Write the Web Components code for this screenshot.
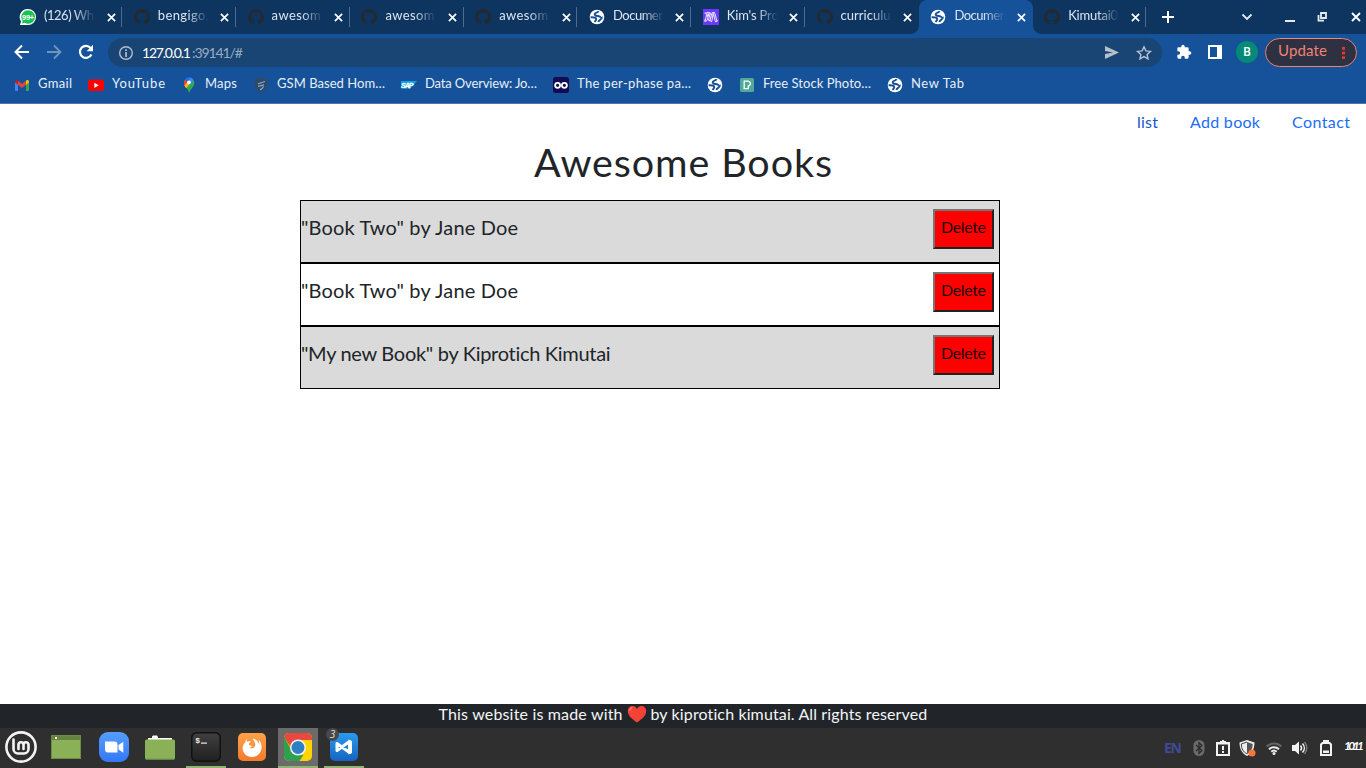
<!DOCTYPE html>
<html lang="en">
<head>
<meta charset="utf-8">
<title>Awesome Books</title>
<style>
html,body{margin:0;height:100%;overflow:hidden;background:#fff;font-family:Lato,"Open Sans",sans-serif}
</style>
</head>
<body>
<desk-top></desk-top>
<script>
const GH='<path fill="#24292f" d="M8 0a8 8 0 0 0-2.53 15.59c.4.07.55-.17.55-.38v-1.34c-2.2.48-2.7-1.07-2.7-1.07-.36-.92-.9-1.17-.9-1.17-.72-.5.06-.48.06-.48.8.05 1.23.82 1.23.82.7 1.22 1.87.87 2.33.66.07-.52.28-.87.5-1.07C4.75 11.3 2.9 10.68 2.9 7.58c0-.87.3-1.6.82-2.15-.08-.2-.36-1.02.08-2.12 0 0 .67-.22 2.2.82a7.5 7.5 0 0 1 4 0c1.53-1.04 2.2-.82 2.2-.82.44 1.1.16 1.92.08 2.12.51.56.82 1.28.82 2.15 0 3.1-1.87 3.75-3.65 3.95.29.25.54.73.54 1.48v2.2c0 .21.15.46.55.38A8 8 0 0 0 8 0z"/>';
const ICONS={
gh:['0 0 16 16',GH],
wa:['0 0 16 16','<path fill="#fff" d="M8 0a8 8 0 0 1 0 16H0l1-3.6A8 8 0 0 1 8 0z"/><path fill="#18c254" d="M8 1.2a6.8 6.8 0 1 1-3.5 12.5L2 14.5l.6-2.6A6.8 6.8 0 0 1 8 1.2z"/><text x="8.1" y="10.8" text-anchor="middle" font-family="Liberation Sans" font-weight="700" font-size="7.4" fill="#fff" textLength="12">99+</text>'],
globe:['0 0 16 16','<circle cx="8" cy="8" r="7.3" fill="#fff"/><path fill="none" stroke="#154f94" stroke-width="1.9" d="M9.5 2.2c-.3 2-3.6 1-3.8 3-.1 1.4 1.7 1.6 3.2 1.8 1.8.2 2 1.2 3.2.8M1.6 8.3c2.5 0 5.3-.2 5.6 1.5.2 1.6-1 1.4-1.3 3.4M13.6 8.2c-1 .2-1.2 1.8-2.2 2.4-1 .6-1.7.8-2 2.4"/>'],
kim:['0 0 16 16','<path fill="#6e38f7" d="M0 0h16v16H0z"/><path fill="none" stroke="#e2dcff" stroke-width="1.1" d="M1.5 12.5C3 12 3.2 3.2 5 3.2S6.8 12.7 8.3 12.7 9.3 3.2 11 3.2s2 9.3 3.5 9.3M1.8 5C3 2.6 4 3.6 4.8 8s2 5.4 3.2 0 2-6.4 3.2 0 2 5 3.3 3M1.8 10.5c-.5 2.5 2.5 2.7 3.2-2s1.8-7 3-2.5"/>'],
close:['0 0 10 10','<path stroke="#fff" stroke-width="1.9" d="M1 1l8 8M9 1L1 9"/>'],
plus:['0 0 12 12','<path stroke="#fff" stroke-width="2" d="M6 0v12M0 6h12"/>'],
chev:['0 0 12 8','<path fill="none" stroke="#e6eaf0" stroke-width="1.8" d="M1.5 1.5L6 6l4.500-4.500"/>'],
min:['0 0 10 12','<path fill="#e6eaf0" d="M0 9h10v2H0z"/>'],
rest:['0 0 10 10','<path fill="none" stroke="#e6eaf0" stroke-width="1.8" d="M4 1h5v5H4zM1.500 3v5.700H7"/>'],
back:['0 0 16 16','<path fill="none" stroke="#fff" stroke-width="2" d="M15 8H2M8 1.500L1.500 8 8 14.500"/>'],
fwd:['0 0 16 16','<path fill="none" stroke="#7393bd" stroke-width="1.800" d="M1 8h13M8 1.500L14.500 8 8 14.500"/>'],
reload:['0 0 16 16','<path fill="none" stroke="#fff" stroke-width="2.200" d="M13.400 10.500A6 6 0 1 1 12.600 4"/><path fill="#fff" d="M15 .8v6.400H8.600z"/>'],
info:['0 0 16 16','<circle cx="8" cy="8" r="6.300" fill="none" stroke="#b5bdc9" stroke-width="1.400"/><path fill="#b5bdc9" d="M7.200 4.200h1.700v1.700H7.200zM7.200 7h1.700v5H7.200z"/>'],
send:['0 0 14 13','<path fill="#b6bfcb" d="M0 0l14 6.500L0 13V8l8-1.500L0 5z"/>'],
star:['0 0 16 16','<path fill="none" stroke="#b8c2ce" stroke-width="1.400" d="M8 1.800l1.900 4.100 4.500.5-3.300 3 .9 4.400L8 11.600l-4 2.200.9-4.400-3.300-3 4.500-.5z"/>'],
puzzle:['0 0 24 24','<path fill="#fff" d="M20.500 11H19V7a2 2 0 0 0-2-2h-4V3.500a2.500 2.500 0 0 0-5 0V5H4a2 2 0 0 0-2 2v3.800h1.500a2.700 2.700 0 0 1 0 5.400H2V20a2 2 0 0 0 2 2h3.800v-1.500a2.700 2.700 0 0 1 5.400 0V22H17a2 2 0 0 0 2-2v-4h1.500a2.500 2.500 0 0 0 0-5z"/>'],
panel:['0 0 14 14','<path fill="#fff" fill-rule="evenodd" d="M0 0h14v14H0zM2 2v10h7V2z"/>'],
gmail:['0 0 16 16','<path fill="#4285f4" d="M1 4.500l3 2V14H2a1 1 0 0 1-1-1z"/><path fill="#34a853" d="M15 4.500l-3 2V14h2a1 1 0 0 0 1-1z"/><path fill="#ea4335" d="M4 3.800l4 3.100 4-3.100v4L8 11 4 7.800z"/><path fill="#c5221f" d="M1 4.800c0-2 2-2.400 3-1.300v4.300L1 5.600z"/><path fill="#fbbc04" d="M15 4.800c0-2-2-2.400-3-1.300v4.300l3-2.200z"/>'],
yt:['0 0 16 16','<rect y="2.500" width="16" height="11.500" rx="2.500" fill="#f00"/><path fill="#fff" d="M6.300 5.700l4.400 2.600-4.400 2.600z"/>'],
maps:['0 0 16 16','<path fill="#34a853" d="M8 16c-.5-2-1.300-3.500-2.800-5.200L12.600 3.300c1.800 3 .2 5.500-1.500 7.600C9.500 12.800 9 14 8 16z"/><path fill="#fbbc04" d="M3.200 7.300L7 9l-1.800 2C4 9.500 3.400 8.500 3.200 7.300z"/><path fill="#ea4335" d="M4 2.400l3 2.600-3.500 4C2.600 6.500 2.600 4.400 4 2.400z"/><path fill="#1a73e8" d="M4 2.400A5 5 0 0 1 9.500.5L6.500 5z"/><path fill="#4285f4" d="M9.500.5a5 5 0 0 1 3.200 3L8.500 8l-2-3z"/><path fill="#fbbc04" d="M3.500 8.500l3-3.600 2 2.600-3.300 3.500z"/><circle cx="8" cy="5.300" r="1.900" fill="#fff"/>'],
shield:['0 0 16 16','<path fill="#34495e" d="M8 .5l6 2.300c0 6-.5 10-6 13-5.500-3-6-7-6-13z"/><path fill="none" stroke="#7aa7dd" stroke-width="1.300" d="M12 4.500L5 6.800M11 7.800L5 9.300M10 9.200c.5 1-1 3-3 3.500"/>'],
sap:['0 0 16 16','<path fill="#0a9fe6" d="M0 4h16l-6.500 7.500H0z"/><text x="0" y="10.700" font-family="Liberation Sans" font-weight="700" font-style="italic" font-size="7" fill="#fff" stroke="#fff" stroke-width=".3" textLength="12.500">SAP</text>'],
oo:['0 0 16 16','<rect width="16" height="16" rx="2.500" fill="#130c54"/><g fill="none" stroke="#fff" stroke-width="1.800"><circle cx="4.600" cy="8.300" r="2.500"/><circle cx="11.400" cy="8.300" r="2.500"/></g>'],
pex:['0 0 16 16','<rect x="1" y="1" width="14" height="14" rx="1.500" fill="#4fab98"/><path fill="none" stroke="#fff" stroke-width="1.300" d="M5.200 4.200h3.600a2.300 2.300 0 0 1 .5 4.600v2.800H5.200z"/>'],
heart:['0 0 20 18','<path fill="#f44336" d="M10 17.500C5 14 .8 10.500.8 6 .8 3 3 1 5.500 1 7.500 1 9.200 2.200 10 4c.8-1.800 2.500-3 4.500-3 2.500 0 4.700 2 4.700 5 0 4.500-4.200 8-9.200 11.500z"/><path fill="none" stroke="#ff8a80" stroke-width="1.200" stroke-linecap="round" d="M2.800 5.200c.3-1.300 1-2 2-2.300"/>'],
mint:['0 0 32 32','<circle cx="16" cy="16" r="14.600" fill="none" stroke="#f4f4f4" stroke-width="2.600"/><path fill="none" stroke="#f4f4f4" stroke-width="2.600" stroke-linecap="round" d="M8.500 8.500V18a4.500 4.500 0 0 0 4.500 4.500h6a4.500 4.500 0 0 0 4.500-4.500v-4.300a2.500 2.500 0 0 0-5 0V18M18.500 13.700a2.500 2.500 0 0 0-5 0V18"/>'],
win:['0 0 30 24','<path fill="#8bb158" d="M0 0h30v24H0z"/><path fill="#66833f" d="M0 0h30v5H0z"/><path fill="#fff" d="M4 2h2v2H4z"/><path fill="none" stroke="#6c8b44" d="M.5.5h29v23H.5z"/>'],
zoom:['0 0 30 30','<defs><linearGradient id="g" x2="0" y2="1"><stop stop-color="#559dff"/><stop offset="1" stop-color="#3478f6"/></linearGradient></defs><rect width="30" height="30" rx="9" fill="url(#g)"/><path fill="#fff" d="M6 9.500h9.500a3 3 0 0 1 3 3v8H9a3 3 0 0 1-3-3zM19.500 13l4.800-3.300v11L19.500 17.500z"/>'],
folder:['0 0 30 25','<path fill="#fff" d="M3 6V3h4V1.500L8 .5h4l1 1.500V3h14v4z"/><rect y="4.500" width="30" height="20" rx="1.500" fill="#8bb158"/><path fill="#75964a" d="M1 23.500h28v1H1z"/>'],
term:['0 0 30 30','<defs><linearGradient id="g" x2="0" y2="1"><stop stop-color="#404040"/><stop offset="1" stop-color="#202020"/></linearGradient></defs><rect x=".75" y=".75" width="28.500" height="28.500" rx="5" fill="url(#g)" stroke="#111" stroke-width="1.500"/><text x="4.300" y="10.500" font-family="Liberation Mono" font-weight="700" font-size="8" fill="#eee">$</text><path fill="#eee" d="M10 10.500h6v1.200h-6z"/>'],
ff:['0 0 28 28','<defs><linearGradient id="g" x2="0" y2="1"><stop stop-color="#ffa24a"/><stop offset="1" stop-color="#f47b2c"/></linearGradient></defs><rect width="28" height="28" rx="5" fill="url(#g)"/><path fill="#fff" d="M9 5.500C7.500 7.500 7.600 8 7.500 9 4 12 3.800 17 6.200 20.200c4 5.300 12 4.700 15.600-.2 3-4.300 2.300-10.500-1.600-13.500 1 2 1.300 3.500 1 5C20 7.500 17.500 6 15.500 5.500c-1.500 1.500 2 3.500 1.800 6-.2 3.500-3.300 4.600-5.800 3.200 1.300-.2 2.500-1 3-2-2 .3-4-.7-3.500-2.300.3-.9 1.500-1 2-1.700-1.500-.7-3-.5-3.800.3-.6-1-.7-2.300-.2-3.500z"/>'],
chrome:['0 0 28 28','<defs><clipPath id="c"><rect width="28" height="28" rx="5"/></clipPath></defs><g clip-path="url(#c)"><path fill="#ffd400" d="M0 0h28v28H0z"/><path fill="#e9483f" d="M0 0h28v7H14L8 16 0 4z"/><path fill="#2fa14e" d="M0 3.500l7.500 13.700 6 4.500h6L15.500 28H0z"/></g><circle cx="14" cy="14.500" r="8" fill="#f3f3f3"/><circle cx="14" cy="14.500" r="6.500" fill="#2f80c3"/>'],
code:['0 0 28 28','<defs><linearGradient id="g" x2="0" y2="1"><stop stop-color="#2a9af0"/><stop offset="1" stop-color="#1565c0"/></linearGradient></defs><rect width="28" height="28" rx="5" fill="url(#g)"/><path fill="none" stroke="#fff" stroke-width="3" stroke-linejoin="round" d="M7 10.500l12.500 9v-11L7 17.500z"/><path fill="#fff" d="M18.500 6.500l3.500 1.500v12l-3.500 1.500z"/>'],
bt:['0 0 12 18','<rect x=".5" y="1" width="11" height="16" rx="5.500" fill="#6b6b6b"/><path fill="none" stroke="#292929" stroke-width="1.200" d="M3 6l6 5.500-3 2.800V3.700l3 2.800L3 12"/>'],
clip:['0 0 14 16','<path fill="#f2f2f2" fill-rule="evenodd" d="M0 2h4V1h2V0h2v1h2v1h4v14H0zM2 4.500V14h10V4.500z"/><path fill="#f2f2f2" d="M6 6h2v4H6zM6 11h2v2H6z"/>'],
guard:['0 0 17 17','<path fill="#eee" d="M8 0l7.500 2.500C15.500 9 13 13.500 8 16 3 13.500.5 9 .5 2.500z"/><path fill="#555" d="M8 2l5.700 2c0 5-2 8-5.700 10z"/><path fill="none" stroke="#444" d="M8 2L2.300 4C2.300 9 4.300 12 8 14"/><circle cx="13" cy="13" r="3.500" fill="#ff7438"/>'],
wifi:['0 0 16 13','<g fill="none" stroke-width="2"><path stroke="#666" d="M.7 4.500a10.500 10.500 0 0 1 14.600 0"/><path stroke="#eee" d="M3 7.300a7.300 7.300 0 0 1 10 0M5.300 9.800a4 4 0 0 1 5.400 0"/></g><circle cx="8" cy="11.400" r="1.500" fill="#eee"/>'],
vol:['0 0 16 14','<path fill="#f2f2f2" d="M0 4h3l4-3.500v13L3 10H0z"/><path fill="none" stroke="#f2f2f2" stroke-width="1.500" d="M8.500 4.500c1.300 1.500 1.300 3.500 0 5M10.500 2.500c2.400 2.600 2.400 6.400 0 9"/><path fill="none" stroke="#777" stroke-width="1.500" d="M12.500 1c3 3.500 3 8.500 0 12"/>'],
bat:['0 0 12 16','<path fill="#f2f2f2" fill-rule="evenodd" d="M3 0h6v2h1l2 2v12H0V4l2-2h1zM2 5v9h8V5L9 4H3z"/><path fill="#f2f2f2" d="M3 10.500h6V13H3z"/>']
};
const make=(css,html)=>class extends HTMLElement{
  connectedCallback(){
    if(this.shadowRoot)return;
    this.attachShadow({mode:'open'}).innerHTML='<style>'+css+'</style>'+(typeof html==='function'?html(this):html);
  }
};
const def=(n,css,html)=>customElements.define(n,make(css,html));

def('ui-icon',':host{display:block;flex:none}svg{display:block;width:100%;height:100%;overflow:visible}',el=>{
  const [vb,body]=ICONS[el.getAttribute('name')];
  const [, ,w,h]=vb.split(' ');
  el.style.width=(el.getAttribute('w')||w)+'px';
  el.style.height=(el.getAttribute('h')||h)+'px';
  return `<svg viewBox="${vb}">${body}</svg>`;
});
/* A single line of text whose tracking is set so that it fills a given width. */
customElements.define('fit-text',class extends HTMLElement{
  connectedCallback(){
    if(this.shadowRoot)return;
    this.attachShadow({mode:'open'}).innerHTML='<style>:host{display:block;flex:none;white-space:pre}span{display:inline-block}</style><span><slot></slot></span>';
    const s=this.shadowRoot.querySelector('span'),w=+this.getAttribute('w'),n=this.textContent.length;
    this.style.width=w+'px';
    const free=w-s.getBoundingClientRect().width;
    s.style.letterSpacing=(free/Math.max(1,n-1)).toFixed(3)+'px';
    s.style.marginRight='-4px';
  }
});
def('browser-tab',`:host{display:flex;position:relative;box-sizing:border-box;width:113.8px;height:34px;padding-left:11.500px;align-items:center;flex:none;color:#dbe4ef;font-size:13px}
:host([active]){background:#15529a;border-radius:8px 8px 0 0}
:host([active])::before,:host([active])::after{content:"";position:absolute;bottom:0;width:8px;height:8px}
:host([active])::before{left:-8px;background:radial-gradient(circle at 0 0,transparent 7.500px,#15529a 8px)}
:host([active])::after{right:-8px;background:radial-gradient(circle at 100% 0,transparent 7.500px,#15529a 8px)}
.t{width:51px;margin-left:8px;height:22px;line-height:18px;overflow:hidden;-webkit-mask:linear-gradient(90deg,#000 58%,transparent);mask:linear-gradient(90deg,#000 58%,transparent)}
.x{margin-left:11.500px}
.s{position:absolute;right:0;top:7px;width:1px;height:20px;background:#4f6c8f}`,
el=>`<ui-icon name="${el.getAttribute('icon')}"></ui-icon><div class="t"><fit-text w="${el.getAttribute('w')}">${el.getAttribute('label')}</fit-text></div><ui-icon class="x" name="close" w="9" h="9"></ui-icon>${el.hasAttribute('sep')?'<div class="s"></div>':''}`);
def('tab-strip',`:host{display:flex;height:34px;background:#0d3560;padding-left:8.500px;align-items:center}
.plus{margin-left:16px}.chev{margin-left:67px}.min{margin-left:32px}.rest{margin-left:22px}.cl{margin-left:23.500px}`,
[['wa','(126) Wh',50,1],['gh','bengigo,',51,1],['gh','awesom',49,1],['gh','awesom',49,1],['gh','awesom',49,1],['globe','Documer',50,1],['kim',"Kim's Pro",52,1],['gh','curriculu',50,0],['globe','Documer',50,2],['gh','Kimutai0',50,1]]
.map(([i,l,w,s])=>`<browser-tab icon="${i}" label="${l}" w="${w}" ${s===1?'sep':s===2?'active':''}></browser-tab>`).join('')+
'<ui-icon class="plus" name="plus"></ui-icon><ui-icon class="chev" name="chev"></ui-icon><ui-icon class="min" name="min"></ui-icon><ui-icon class="rest" name="rest"></ui-icon><ui-icon class="cl" name="close"></ui-icon>');
def('nav-bar',`:host{display:flex;height:36px;align-items:center;padding-left:14px;color:#fff}
.g{margin-left:16px}
.url{box-sizing:border-box;display:flex;align-items:center;width:1054px;height:29px;margin:1px 0 0 14px;border-radius:15px;background:#194575;padding:0 10px;font-size:14px;line-height:18px}
.url .h{margin-left:8px}.url .r{color:#98abc3;margin-left:1px}.sp{flex:1}.st{margin-left:17px}
.pz{margin-left:14px}.pn{margin-left:16px}
.av{width:22px;height:22px;border-radius:50%;background:#058a78;margin-left:14px;font:500 12px/22px Roboto,sans-serif;text-align:center}
.up{box-sizing:border-box;display:flex;width:92px;height:29px;border:1px solid #ef8377;border-radius:15px;background:#2d3141;margin:1px 0 0 7px;padding-left:12px;color:#ef8377;font-size:15px;line-height:23px}
.dots{margin:7px 0 0 15px;width:3px;height:13px;background:radial-gradient(circle,#e8362b 1.500px,transparent 1.900px) 0 0/3px 4.700px}`,
`<ui-icon name="back"></ui-icon><ui-icon class="g" name="fwd"></ui-icon><ui-icon class="g" name="reload"></ui-icon>
<div class="url"><ui-icon name="info"></ui-icon><fit-text class="h" w="49">127.0.0.1</fit-text><fit-text class="r" w="51">:39141/#</fit-text><div class="sp"></div><ui-icon name="send"></ui-icon><ui-icon class="st" name="star"></ui-icon></div>
<ui-icon class="pz" name="puzzle" w="16" h="16"></ui-icon><ui-icon class="pn" name="panel"></ui-icon><div class="av">B</div><div class="up"><fit-text w="49">Update</fit-text><div class="dots"></div></div>`);
def('bookmark-item',':host{display:flex;align-items:center;gap:8px;flex:none;height:16px}fit-text{margin-top:-4px;line-height:16px}',
el=>`<ui-icon name="${el.getAttribute('icon')}"></ui-icon>`+(el.hasAttribute('w')?`<fit-text w="${el.getAttribute('w')}">${el.getAttribute('label')}</fit-text>`:''));
def('bookmark-bar',':host{display:flex;gap:16px;box-sizing:border-box;height:34px;padding:7px 0 0 14px;color:#e8eef6;font-size:13px;border-bottom:1px solid #4977ae}',
[['gmail','Gmail',34],['yt','YouTube',53],['maps','Maps',32],['shield','GSM Based Hom…',108],['sap','Data Overview: Jo…',112],['oo','The per-phase pa…',114],['globe'],['pex','Free Stock Photo…',108],['globe','New Tab',53]]
.map(([i,l,w])=>`<bookmark-item icon="${i}" ${l?`label="${l}" w="${w}"`:''}></bookmark-item>`).join(''));
def('book-row',`:host{display:flex;justify-content:space-between;box-sizing:border-box;height:63px;border:1px solid #000;padding:8px 5px 0 0;color:#212529;font-size:20px;line-height:37px}
:host([shade]){background:#dadada}
button{box-sizing:border-box;width:61px;height:40px;border:2px solid;border-color:#767676 #212121 #212121 #767676;background:red;margin:0;padding:0 0 4px 6px;font:16px/32px Lato,sans-serif;color:#1c0000;text-align:left}`,
el=>`<fit-text w="${el.getAttribute('w')}"><slot></slot>${el.getAttribute('label')}</fit-text><button><fit-text w="45">Delete</fit-text></button>`);
def('books-page',`:host{display:flex;flex-direction:column;height:624px;background:#fff}
nav{display:flex;justify-content:flex-end;gap:32px;height:36px;padding-right:16px;font-size:16px;line-height:35px;color:#1a6dfa}
nav .a{color:#1458ca}
h1{margin:0;display:flex;justify-content:center;height:60px;font-size:39.500px;font-weight:400;line-height:44px;color:#212529}
main{width:700px;margin-left:300px;flex:1}
footer{display:flex;justify-content:center;height:24px;background:#212529;color:#f3f5f7;font-size:16px;line-height:20px}
footer ui-icon{margin:1px 4px 0 4px}`,
`<nav><fit-text class="a" w="21">list</fit-text><fit-text w="70">Add book</fit-text><fit-text w="58">Contact</fit-text></nav>
<h1><fit-text w="298">Awesome Books</fit-text></h1>
<main><book-row shade w="217" label="&amp;quot;Book Two&amp;quot; by Jane Doe"></book-row><book-row w="217" label="&amp;quot;Book Two&amp;quot; by Jane Doe"></book-row><book-row shade w="310" label="&amp;quot;My new Book&amp;quot; by Kiprotich Kimutai"></book-row></main>
<footer><fit-text w="184">This website is made with</fit-text><ui-icon name="heart" w="20" h="18"></ui-icon><fit-text w="277">by kiprotich kimutai. All rights reserved</fit-text></footer>`);
def('task-item',`:host{display:flex;position:relative;justify-content:center;align-items:center;height:40px;flex:none}
.b{position:relative;display:flex;justify-content:center;align-items:center;width:40px;height:40px;padding-bottom:2px;box-sizing:border-box}
:host([open]) .b{box-shadow:inset 0 -2px #92b372}
:host([focus]) .b{background:#6b6b6b}
.n{position:absolute;left:2px;top:0;width:13px;height:13px;border-radius:50%;background:#484848;color:#e0e0e0;font:italic 10px/12px "Open Sans",sans-serif;text-align:center}`,
el=>{el.style.width=el.getAttribute('w')+'px';return `<div class="b"><ui-icon name="${el.getAttribute('icon')}"></ui-icon>${el.hasAttribute('count')?`<div class="n">${el.getAttribute('count')}</div>`:''}</div>`});
def('task-bar',`:host{display:flex;height:40px;background:#2f2f2f;align-items:center}
.sp{flex:1}.tray{display:flex;align-items:center;height:40px;padding-right:2px}
.en{font:700 14px/18px "Noto Sans",sans-serif;color:#3f4b96}.ck{font:italic 700 12px/16px Lato,sans-serif;color:#fff;margin:-5px 0 0 12px}`,
[['mint',42],['win',48],['zoom',48],['folder',44],['term',48,'open'],['ff',44],['chrome',48,'open focus'],['code',44,'open count="3"']].map(([i,w,a])=>`<task-item icon="${i}" w="${w}" ${a||''}></task-item>`).join('')+
`<div class="sp"></div><div class="tray"><fit-text class="en" w="18">EN</fit-text>
${[['bt',11],['clip',11],['guard',9],['wifi',10],['vol',10],['bat',12]].map(([i,m])=>`<ui-icon name="${i}" style="margin-left:${m}px"></ui-icon>`).join('')}<fit-text class="ck" w="20">10:11</fit-text></div>`);
def('desk-top',':host{display:flex;flex-direction:column;width:1366px;height:768px;overflow:hidden}header{height:104px;background:#15529a}',
'<header><tab-strip></tab-strip><nav-bar></nav-bar><bookmark-bar></bookmark-bar></header><books-page></books-page><task-bar></task-bar>');
</script>
</body>
</html>
